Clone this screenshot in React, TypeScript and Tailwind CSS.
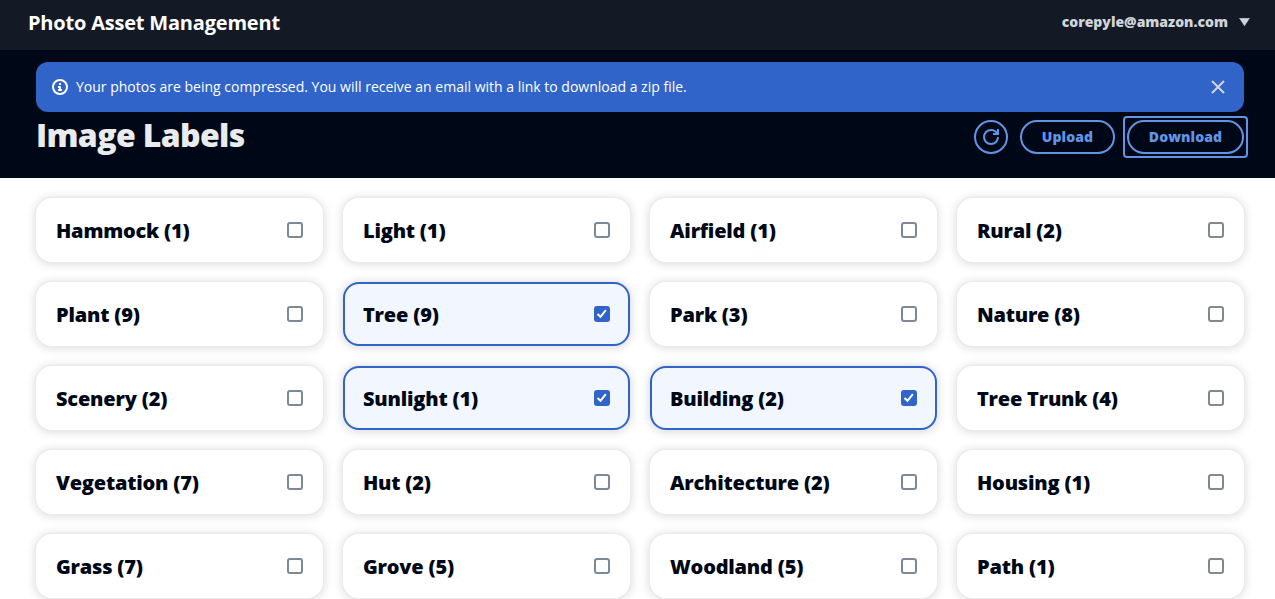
const labels: [string, number, boolean?][] = [
  ["Hammock", 1], ["Light", 1], ["Airfield", 1], ["Rural", 2],
  ["Plant", 9], ["Tree", 9, true], ["Park", 3], ["Nature", 8],
  ["Scenery", 2], ["Sunlight", 1, true], ["Building", 2, true], ["Tree Trunk", 4],
  ["Vegetation", 7], ["Hut", 2], ["Architecture", 2], ["Housing", 1],
  ["Grass", 7], ["Grove", 5], ["Woodland", 5], ["Path", 1],
];

function TopBar() {
  return (
    <header className="flex h-[50px] items-center justify-between bg-[#141a25] pr-[25px] pb-[5px] pl-7">
      <span className="text-[20px] leading-6 font-bold tracking-[-0.2px] text-white">Photo Asset Management</span>
      <button className="flex items-center gap-[11px] pb-[2px] text-[14px] leading-5 font-extrabold text-[#d1d5db]">
        corepyle@amazon.com
        <svg width="11" height="8" viewBox="0 0 11 8" fill="currentColor">
          <path d="M.5 .2h10L5.5 7.8Z" stroke="currentColor" strokeWidth=".5" strokeLinejoin="round" />
        </svg>
      </button>
    </header>
  );
}

function Flash() {
  return (
    <div className="flex h-[50px] items-center rounded-xl bg-[#3164c9] px-4 text-white">
      <svg width="16" height="16" viewBox="0 0 16 16" fill="none" stroke="currentColor" strokeWidth="2">
        <circle cx="8" cy="8" r="7" />
        <path d="M8 11V8H6M10 11H6M8 4v2" strokeLinejoin="round" />
      </svg>
      <p className="ml-2 flex-1 text-[14px] leading-5">
        Your photos are being compressed. You will receive an email with a link to download a zip file.
      </p>
      <button aria-label="Dismiss" className="mr-[2px] text-[#d1d5db]">
        <svg width="16" height="16" viewBox="0 0 16 16" stroke="currentColor" strokeWidth="2">
          <path d="m2 2 12 12M14 2 2 14" />
        </svg>
      </button>
    </div>
  );
}

function Actions() {
  return (
    <div className="flex gap-3 pt-2 text-[14px] leading-5 font-extrabold tracking-[0.1px] text-[#6095e6]">
      <button aria-label="Refresh" className="flex size-[34px] items-center justify-center rounded-full border-2 border-[#6095e6]">
        <svg width="16" height="16" viewBox="0 0 16 16" fill="none" stroke="currentColor" strokeWidth="2">
          <path d="M15 8c0 3.87-3.13 7-7 7s-7-3.13-7-7 3.13-7 7-7c2.79 0 5.2 1.63 6.33 4" />
          <path d="M10 5h5V0" />
        </svg>
      </button>
      <button className="h-[34px] w-[95px] rounded-full border-2 border-[#6095e6]">Upload</button>
      <button className="relative h-[34px] w-[117px] rounded-full border-2 border-[#6095e6] after:pointer-events-none after:absolute after:-inset-[6px] after:rounded-[4px] after:border-2 after:border-[#6095e6]">
        Download
      </button>
    </div>
  );
}

function Card({ name, count, checked }: { name: string; count: number; checked?: boolean }) {
  return (
    <div
      className={
        "flex h-16 items-center justify-between rounded-2xl border-2 px-[18px] shadow-[0_0_1px_1px_#e9ebed,0_1px_8px_2px_rgba(0,7,22,0.12)] " +
        (checked ? "border-[#3164c9] bg-[#f2f7ff]" : "border-white bg-white")
      }
    >
      <span className="pt-[2px] text-[20px] leading-6 font-extrabold tracking-[-0.2px] text-[#000716]">
        {name} ({count})
      </span>
      {checked ? (
        <span className="flex size-4 items-center justify-center rounded-[3px] bg-[#3164c9]">
          <svg width="16" height="16" viewBox="0 0 16 16" fill="none" stroke="#fff" strokeWidth="2">
            <path d="m3.5 8 3 2.8 5.3-6.6" />
          </svg>
        </span>
      ) : (
        <span className="size-4 rounded-[3px] border-2 border-[#7d8998] bg-white" />
      )}
    </div>
  );
}

export default function App() {
  return (
    <div className="h-[599px] overflow-hidden bg-white font-['Open_Sans',sans-serif]">
      <TopBar />
      <section className="h-32 bg-[#000716] pt-3 pr-[31px] pl-9">
        <Flash />
        <div className="flex items-start justify-between">
          <h1 className="pt-[3px] text-[32px] leading-10 font-extrabold tracking-[-0.64px] text-[#e9ebed]">Image Labels</h1>
          <Actions />
        </div>
      </section>
      <main className="grid grid-cols-4 gap-5 pt-5 pr-[31px] pl-9">
        {labels.map(([name, count, checked]) => (
          <Card key={name} name={name} count={count} checked={checked} />
        ))}
      </main>
    </div>
  );
}
